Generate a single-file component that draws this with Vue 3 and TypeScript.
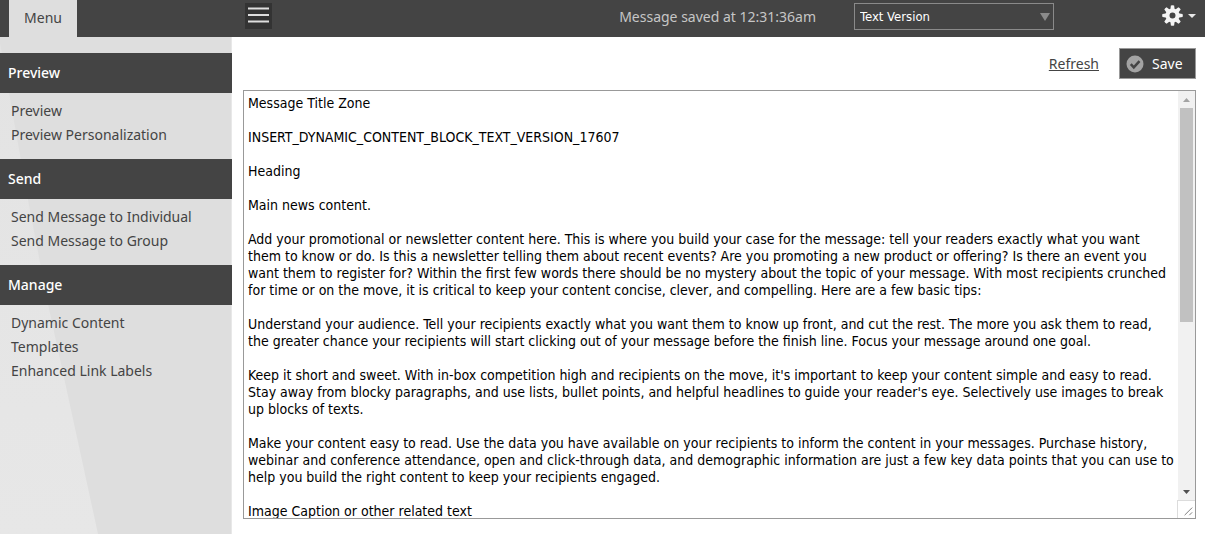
<script setup lang="ts">
import { ref } from 'vue'

interface Section {
  title: string
  links: string[]
}

const sections: Section[] = [
  { title: 'Preview', links: ['Preview', 'Preview Personalization'] },
  { title: 'Send', links: ['Send Message to Individual', 'Send Message to Group'] },
  { title: 'Manage', links: ['Dynamic Content', 'Templates', 'Enhanced Link Labels'] },
]

const version = ref('Text Version')

const message = ref(`Message Title Zone

INSERT_DYNAMIC_CONTENT_BLOCK_TEXT_VERSION_17607

Heading

Main news content.

Add your promotional or newsletter content here. This is where you build your case for the message: tell your readers exactly what you want
them to know or do. Is this a newsletter telling them about recent events? Are you promoting a new product or offering? Is there an event you
want them to register for? Within the first few words there should be no mystery about the topic of your message. With most recipients crunched
for time or on the move, it is critical to keep your content concise, clever, and compelling. Here are a few basic tips:

Understand your audience. Tell your recipients exactly what you want them to know up front, and cut the rest. The more you ask them to read,
the greater chance your recipients will start clicking out of your message before the finish line. Focus your message around one goal.

Keep it short and sweet. With in-box competition high and recipients on the move, it's important to keep your content simple and easy to read.
Stay away from blocky paragraphs, and use lists, bullet points, and helpful headlines to guide your reader's eye. Selectively use images to break
up blocks of texts.

Make your content easy to read. Use the data you have available on your recipients to inform the content in your messages. Purchase history,
webinar and conference attendance, open and click-through data, and demographic information are just a few key data points that you can use to
help you build the right content to keep your recipients engaged.

Image Caption or other related text`)

const teeth = [0, 45, 90, 135, 180, 225, 270, 315]
</script>

<template>
  <div class="page">
    <header class="topbar">
      <button class="menu-tab" type="button">Menu</button>
      <button class="toggle" type="button" aria-label="Toggle sidebar">
        <svg width="27" height="26" viewBox="0 0 27 26" aria-hidden="true">
          <path d="M3 5.5h21M3 12h21M3 18.5h21" stroke="#dedede" stroke-width="2" />
        </svg>
      </button>
      <p class="status">Message saved at 12:31:36am</p>
      <div class="version">
        <select v-model="version" aria-label="Message version">
          <option>Text Version</option>
        </select>
        <svg class="arrow" width="10" height="8" viewBox="0 0 10 8" aria-hidden="true">
          <path d="M0 0h10L5 8z" fill="#8b8b8b" />
        </svg>
      </div>
      <button class="settings" type="button" aria-label="Settings">
        <svg width="21" height="21" viewBox="0 0 21 21" aria-hidden="true">
          <g fill="#f4f4f4">
            <path
              v-for="angle in teeth"
              :key="angle"
              d="M8.9 0.5Q10.5 -0.1 12.1 0.5L12.7 5H8.3z"
              :transform="`rotate(${angle} 10.5 10.5)`"
            />
          </g>
          <circle cx="10.5" cy="10.5" r="5" fill="none" stroke="#f4f4f4" stroke-width="4" />
        </svg>
        <svg width="8" height="4" viewBox="0 0 8 4" aria-hidden="true">
          <path d="M0 0h8L4 4z" fill="#e8e8e8" />
        </svg>
      </button>
    </header>

    <div class="body">
      <nav class="sidebar" aria-label="Message menu">
        <svg class="sheen" viewBox="0 0 232 497" preserveAspectRatio="none" aria-hidden="true">
          <defs>
            <linearGradient id="sheen-fill" x1="0" y1="0" x2="0" y2="1">
              <stop offset="0" stop-color="#e3e3e3" />
              <stop offset="1" stop-color="#e7e7e7" />
            </linearGradient>
          </defs>
          <path d="M0 6L9 56L28 163L48 267L98 497H0z" fill="url(#sheen-fill)" />
        </svg>
        <section v-for="section in sections" :key="section.title">
          <h2>{{ section.title }}</h2>
          <ul>
            <li v-for="link in section.links" :key="link"><a href="#">{{ link }}</a></li>
          </ul>
        </section>
      </nav>

      <main class="content">
        <div class="actions">
          <a href="#">Refresh</a>
          <button class="save" type="button">
            <svg width="18" height="18" viewBox="0 0 18 18" aria-hidden="true">
              <circle cx="9" cy="9" r="8.5" fill="#a3a3a3" />
              <path d="M4.8 9.2l3 3.2 5.7-6.3" fill="none" stroke="#444" stroke-width="2.5" />
            </svg>
            Save
          </button>
        </div>
        <div class="editor">
          <textarea v-model="message" aria-label="Message text" wrap="off"></textarea>
          <div class="scrollbar" aria-hidden="true">
            <svg width="17" height="17" viewBox="0 0 17 17">
              <path d="M5 11h7L8.500 7z" fill="#a3a3a3" />
            </svg>
            <div class="track"><div class="thumb"></div></div>
            <svg width="17" height="17" viewBox="0 0 17 17">
              <path d="M5 7h7L8.500 11z" fill="#505050" />
            </svg>
            <svg class="grip" width="18" height="18" viewBox="0 0 18 18">
              <path d="M7 15l8-8M12 15l3-3" stroke="#777" />
            </svg>
          </div>
        </div>
      </main>
    </div>
  </div>
</template>

<style>
body {
  margin: 0;
}
</style>

<style scoped>
.page {
  display: flex;
  flex-direction: column;
  height: 100vh;
  background: #fff;
  color: #444;
  font-family: "Noto Sans", sans-serif;
  font-size: 14px;
}

button {
  margin: 0;
  box-sizing: border-box;
  font: inherit;
}

select,
textarea {
  box-sizing: border-box;
  margin: 0;
  font-family: "DejaVu Sans Condensed", "DejaVu Sans", sans-serif;
}

svg {
  display: block;
  flex: none;
}

.topbar {
  display: flex;
  align-items: flex-start;
  flex: none;
  height: 37px;
  padding: 0 9px;
  background: #444;
}

.menu-tab {
  width: 68px;
  height: 37px;
  padding: 0 0 2px;
  border: 0;
  background: #dedede;
  color: #444;
}

.toggle {
  margin: 3px auto 0 168px;
  padding: 0;
  border: 0;
  background: #333;
}

.status {
  margin: 0 38px 0 0;
  color: #c6c6c6;
  line-height: 34px;
}

.version {
  position: relative;
  width: 200px;
  margin: 3px 108px 0 0;
}

.version select {
  display: block;
  width: 100%;
  height: 27px;
  padding: 0 5px;
  border: 1px solid #8a8a8a;
  border-radius: 0;
  background: #444;
  color: #fff;
  font-size: 13px;
  appearance: none;
}

.arrow {
  position: absolute;
  top: 10px;
  right: 4px;
  pointer-events: none;
}

.settings {
  display: flex;
  align-items: center;
  gap: 5px;
  margin-top: 5px;
  padding: 0;
  border: 0;
  background: none;
}

.body {
  display: flex;
  flex: 1;
  min-height: 0;
}

.sidebar {
  position: relative;
  box-sizing: border-box;
  flex: none;
  width: 232px;
  padding-top: 16px;
  background: linear-gradient(to left, #e8e8e8 1px, #dedede 1px);
}

.sheen {
  position: absolute;
  inset: 0;
  width: 100%;
  height: 100%;
}

.sidebar section {
  position: relative;
}

.sidebar h2 {
  margin: 0;
  padding-left: 8px;
  background: #444;
  color: #fff;
  font-size: 14px;
  font-weight: 500;
  line-height: 40px;
}

.sidebar ul {
  margin: 0;
  padding: 6px 11px 12px;
  list-style: none;
}

.sidebar li {
  line-height: 24px;
}

.sidebar a {
  color: #444;
  text-decoration: none;
}

.content {
  display: flex;
  flex: 1;
  flex-direction: column;
  min-width: 0;
  padding: 11px 9px 15px 11px;
}

.actions {
  display: flex;
  align-items: center;
  justify-content: flex-end;
  gap: 20px;
  margin-bottom: 11px;
}

.actions a {
  color: #444;
}

.save {
  display: flex;
  align-items: center;
  gap: 8px;
  width: 77px;
  height: 31px;
  padding: 0 6px;
  border: 1px solid #999;
  background: #444;
  color: #fff;
}

.editor {
  display: flex;
  flex: 1;
  min-height: 0;
  border: 1px solid #999;
}

.editor textarea {
  flex: 1;
  min-width: 0;
  padding: 4px;
  border: 0;
  outline: 0;
  background: #fff;
  color: #000;
  font-size: 14px;
  line-height: 17px;
  resize: none;
  overflow: hidden;
}

.scrollbar {
  display: flex;
  flex: none;
  flex-direction: column;
  align-items: flex-end;
  width: 17px;
  background: #f1f1f1;
}

.track {
  flex: 1;
  align-self: stretch;
  padding: 0 2px;
}

.thumb {
  height: 57%;
  background: #c1c1c1;
}

.grip {
  box-sizing: border-box;
  border: 1px solid #dcdcdc;
  border-width: 1px 0 0 1px;
  background: #fff;
}
</style>
